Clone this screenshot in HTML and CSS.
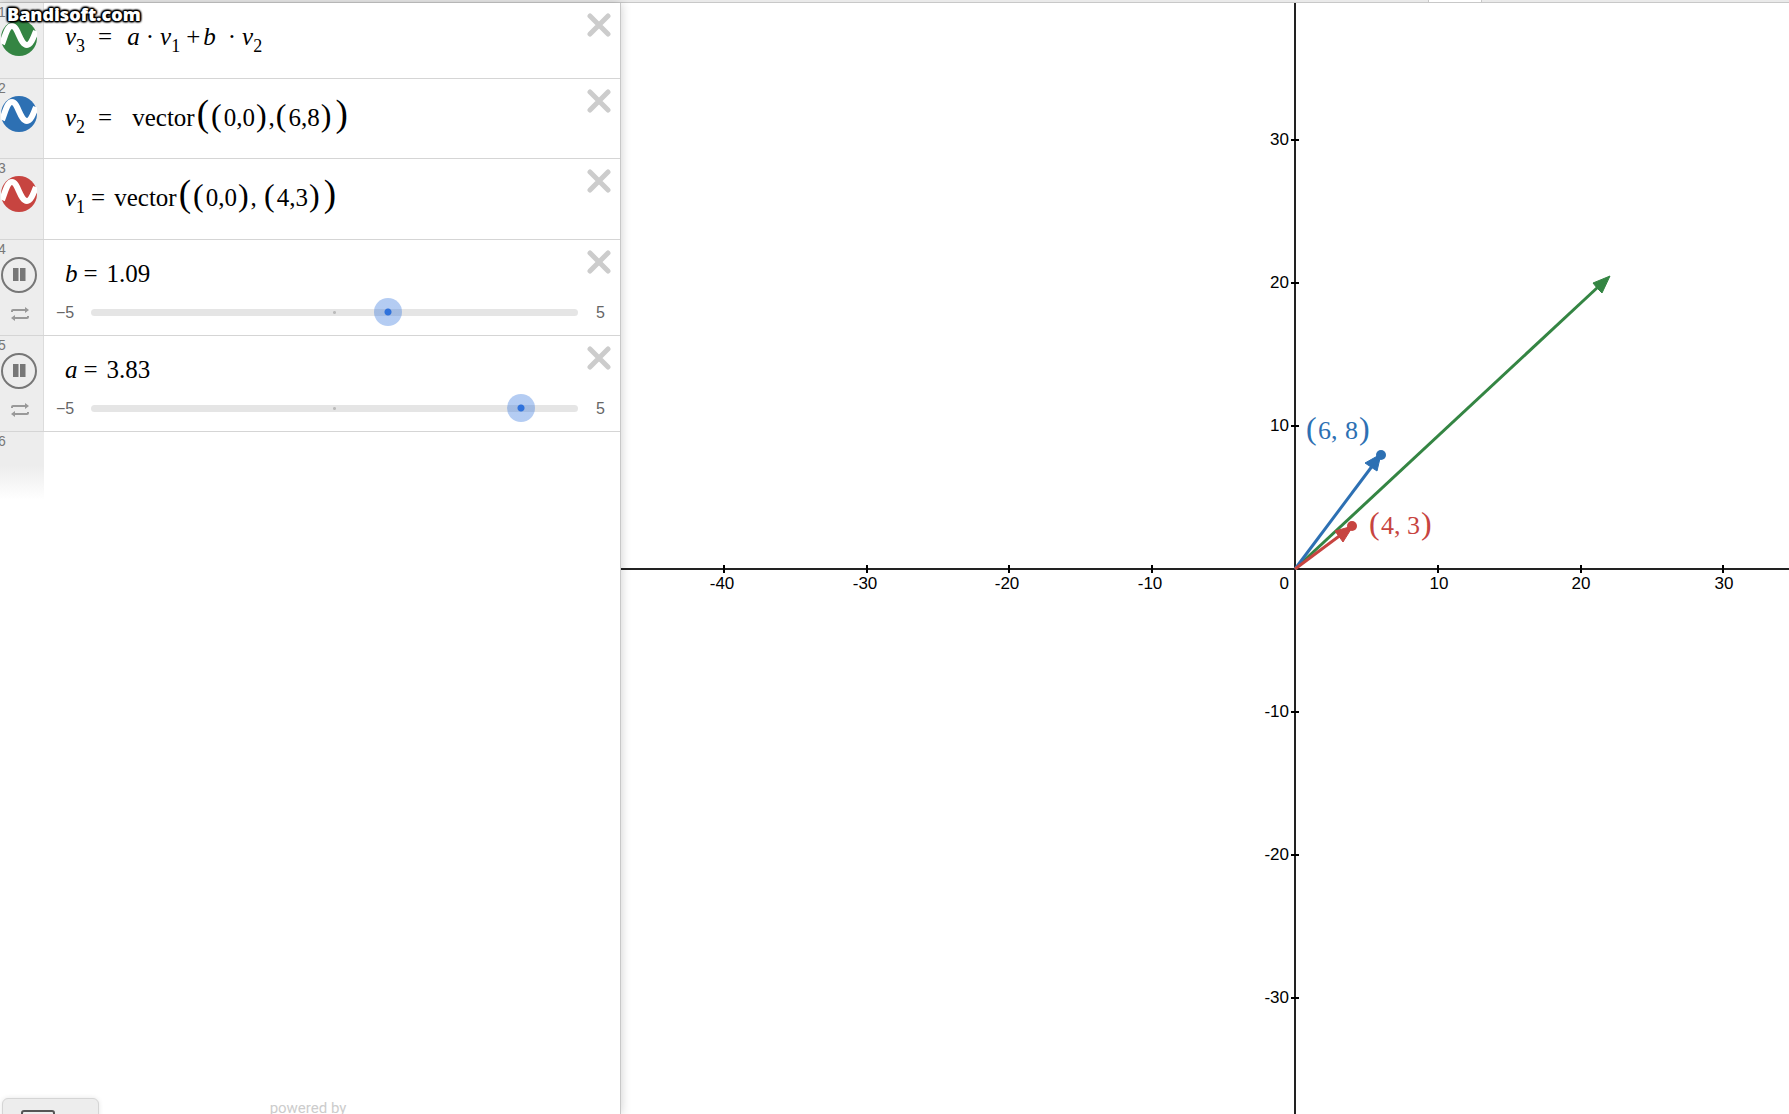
FILE: index.html
```html
<!DOCTYPE html>
<html lang="en">
<head>
    <meta charset="UTF-8">
    <meta name="viewport" content="width=device-width, initial-scale=1.0">
    <title>Vector Calculator</title>
    <link rel="stylesheet" href="styles.css">
</head>
<body>
    <!-- shared icons -->
    <svg class="icon-defs" aria-hidden="true">
        <symbol id="icon-wave" viewBox="0 0 36 36">
            <circle cx="18" cy="18" r="18" fill="currentColor"/>
            <path d="M1 24 C4 17 6 6 11 6 C17 6 19 25 26 25 C30 25 33 16 35 11" fill="none" stroke="#fff" stroke-width="6"/>
        </symbol>
        <symbol id="icon-pause" viewBox="0 0 36 36">
            <circle cx="18" cy="18" r="17" fill="none" stroke="#777" stroke-width="2"/>
            <path d="M12 11h5.5v13h-5.5zM19 11h5.5v13h-5.5z" fill="#777"/>
        </symbol>
        <symbol id="icon-loop" viewBox="0 0 20 16">
            <path d="M2 6 V5 Q2 4 3 4 H15 M18 10 V11 Q18 12 17 12 H5" fill="none" stroke="#999" stroke-width="2"/>
            <path d="M15 1 L19 4 L15 7zM5 9 L1 12 L5 15z" fill="#999"/>
        </symbol>
        <symbol id="icon-close" viewBox="0 0 24 24">
            <path d="M3 3 L21 21 M21 3 L3 21" fill="none" stroke="#ccc" stroke-width="5" stroke-linecap="round"/>
        </symbol>
    </svg>

    <header class="topbar">
        <button class="topbar-tab" aria-label="Graph settings"></button>
    </header>
    <div class="watermark">Bandisoft.com</div>

    <main class="calculator">
        <section class="pane">
            <ol class="expressions">
                <li class="expression first">
                    <div class="gutter">
                        <span class="index">1</span>
                        <button class="toggle green" aria-label="Hide v3"><svg><use href="#icon-wave"/></svg></button>
                    </div>
                    <div class="content">
                        <div class="math"><i>v</i><sub>3</sub><span class="eq wide">=</span><i>a</i><span class="dot">·</span><i>v</i><sub>1</sub><span class="plus">+</span><i>b</i><span class="dot spaced">·</span><i>v</i><sub>2</sub></div>
                    </div>
                    <button class="close" aria-label="Delete expression 1"><svg><use href="#icon-close"/></svg></button>
                </li>
                <li class="expression tall">
                    <div class="gutter">
                        <span class="index">2</span>
                        <button class="toggle blue" aria-label="Hide v2"><svg><use href="#icon-wave"/></svg></button>
                    </div>
                    <div class="content">
                        <div class="math"><i>v</i><sub>2</sub><span class="eq wider">=</span>vector<span class="outer">(</span><span class="paren">(</span>0,0<span class="paren">)</span>,<span class="paren">(</span>6,8<span class="paren">)</span><span class="outer">)</span></div>
                    </div>
                    <button class="close" aria-label="Delete expression 2"><svg><use href="#icon-close"/></svg></button>
                </li>
                <li class="expression tall">
                    <div class="gutter">
                        <span class="index">3</span>
                        <button class="toggle red" aria-label="Hide v1"><svg><use href="#icon-wave"/></svg></button>
                    </div>
                    <div class="content">
                        <div class="math"><i>v</i><sub>1</sub><span class="eq">=</span>vector<span class="outer">(</span><span class="paren">(</span>0,0<span class="paren">)</span>, <span class="paren">(</span>4,3<span class="paren">)</span><span class="outer">)</span></div>
                    </div>
                    <button class="close" aria-label="Delete expression 3"><svg><use href="#icon-close"/></svg></button>
                </li>
                <li class="expression">
                    <div class="gutter">
                        <span class="index">4</span>
                        <button class="toggle" aria-label="Pause b"><svg><use href="#icon-pause"/></svg></button>
                        <button class="loop" aria-label="Loop mode"><svg><use href="#icon-loop"/></svg></button>
                    </div>
                    <div class="content">
                        <label class="math" for="slider-b"><i>b</i><span class="eq">=</span>1.09</label>
                        <div class="slider">
                            <span class="min">−5</span>
                            <div class="track"><input type="range" id="slider-b" min="-5" max="5" step="0.01" value="1.09"></div>
                            <span class="max">5</span>
                        </div>
                    </div>
                    <button class="close" aria-label="Delete expression 4"><svg><use href="#icon-close"/></svg></button>
                </li>
                <li class="expression">
                    <div class="gutter">
                        <span class="index">5</span>
                        <button class="toggle" aria-label="Pause a"><svg><use href="#icon-pause"/></svg></button>
                        <button class="loop" aria-label="Loop mode"><svg><use href="#icon-loop"/></svg></button>
                    </div>
                    <div class="content">
                        <label class="math" for="slider-a"><i>a</i><span class="eq">=</span>3.83</label>
                        <div class="slider">
                            <span class="min">−5</span>
                            <div class="track"><input type="range" id="slider-a" min="-5" max="5" step="0.01" value="3.83"></div>
                            <span class="max">5</span>
                        </div>
                    </div>
                    <button class="close" aria-label="Delete expression 5"><svg><use href="#icon-close"/></svg></button>
                </li>
                <li class="expression empty">
                    <div class="gutter"><span class="index">6</span></div>
                </li>
            </ol>
            <footer class="pane-footer">
                <button class="keypad" aria-label="Show keypad">
                    <svg width="34" height="24" viewBox="0 0 34 24"><rect x="1" y="1" width="32" height="22" rx="2" fill="none" stroke="#555" stroke-width="2"/></svg>
                </button>
                <span class="powered">powered by</span>
            </footer>
        </section>

        <!-- origin of the graph is 0,0; ten units are 143 wide -->
        <svg class="graph" viewBox="-674 -566 1168 1111" preserveAspectRatio="xMidYMid slice" role="img" aria-label="Vectors v1, v2 and v3">
            <path class="axis" d="M-675 0H494M0 -567V545"/>
            <path class="tick" d="M-571 -4V4M-428 -4V4M-286 -4V4M-143 -4V4M143 -4V4M286 -4V4M428 -4V4"/>
            <path class="tick" d="M-4 -429H4M-4 -286H4M-4 -143H4M-4 143H4M-4 286H4M-4 429H4"/>

            <g class="labels-x">
                <text x="-573" y="20">-40</text>
                <text x="-430" y="20">-30</text>
                <text x="-288" y="20">-20</text>
                <text x="-145" y="20">-10</text>
                <text x="144" y="20">10</text>
                <text x="286" y="20">20</text>
                <text x="429" y="20">30</text>
            </g>
            <g class="labels-y">
                <text x="-6" y="-424">30</text>
                <text x="-6" y="-281">20</text>
                <text x="-6" y="-138">10</text>
                <text x="-6" y="20">0</text>
                <text x="-6" y="148">-10</text>
                <text x="-6" y="291">-20</text>
                <text x="-6" y="434">-30</text>
            </g>

            <g class="green">
                <path class="vector" d="M0 0L303 -282"/>
                <path class="head" d="M315 -293L307 -276L302 -281L298 -286z"/>
            </g>
            <g class="blue">
                <path class="vector" d="M0 0L78 -104"/>
                <path class="head" d="M86 -115L82 -98L70 -106z"/>
                <circle cx="86" cy="-114" r="5"/>
                <text class="point" y="-130"><tspan class="brace" x="11">(</tspan><tspan x="23">6,</tspan><tspan x="50">8</tspan><tspan class="brace" x="64">)</tspan></text>
            </g>
            <g class="red">
                <path class="vector" d="M0 0L47 -35"/>
                <path class="head" d="M58 -43L48 -27L40 -38z"/>
                <circle cx="57" cy="-43" r="5"/>
                <text class="point" y="-35"><tspan class="brace" x="74">(</tspan><tspan x="86">4,</tspan><tspan x="112">3</tspan><tspan class="brace" x="126">)</tspan></text>
            </g>
        </svg>
    </main>
</body>
</html>
```
FILE: styles.css
```css
* {
    box-sizing: border-box;
}
body {
    margin: 0;
    height: 100vh;
    display: flex;
    flex-direction: column;
    overflow: hidden;
    background: white;
    font-family: "Liberation Sans", Arial, sans-serif;
}
button {
    padding: 0;
    border: none;
    background: none;
    cursor: pointer;
}
button svg {
    display: block;
    width: 100%;
    height: 100%;
}
.icon-defs {
    display: none;
}
.green {
    color: #348543;
}
.blue {
    color: #2d70b3;
}
.red {
    color: #c74440;
}

/* top bar */
.topbar {
    display: flex;
    justify-content: flex-end;
    flex: none;
    height: 3px;
    padding-right: 307px;
    background: #eaeaea;
    border-bottom: 1px solid #c8c8c8;
}
.topbar-tab {
    width: 54px;
    background: white;
    border: solid #c8c8c8;
    border-width: 0 1px;
}
.watermark {
    position: absolute;
    top: 3px;
    left: 7px;
    z-index: 3;
    color: white;
    font-family: "Open Sans", sans-serif;
    font-size: 18px;
    font-weight: 800;
    line-height: 22px;
    text-shadow: 1px 0 1px black, -1px 0 1px black, 0 1px 1px black, 0 -1px 1px black,
        1px 1px 2px black, -1px -1px 2px black, 1px -1px 2px black, -1px 1px 2px black,
        0 0 3px black, 0 0 3px black;
}

/* expression list */
.calculator {
    flex: 1;
    min-height: 0;
    display: grid;
    grid-template-columns: 621fr 1168fr;
}
.pane {
    z-index: 1;
    display: flex;
    flex-direction: column;
    min-width: 0;
    min-height: 0;
    background: white;
    border-right: 1px solid #c8c8c8;
    box-shadow: 0 0 10px rgba(0,0,0,0.2);
}
.expressions {
    flex: 1;
    min-height: 0;
    margin: 0;
    padding: 0;
    list-style: none;
}
.expression {
    position: relative;
    display: flex;
    min-height: 96px;
    border-bottom: 1px solid #d5d5d5;
}
.expression.first {
    min-height: 76px;
}
.expression.tall {
    min-height: 80px;
}
.expression.tall + .tall {
    min-height: 81px;
}
.expression.empty {
    min-height: 68px;
    border-bottom: none;
}
.gutter {
    flex: none;
    width: 44px;
    display: flex;
    flex-direction: column;
    padding-left: 1px;
    background: #ededed;
    border-right: 1px solid #dcdcdc;
}
.empty .gutter {
    background: linear-gradient(#ededed 50%, white);
    border-right-color: transparent;
}
.index {
    height: 17px;
    margin-left: -3px;
    color: #777;
    font-size: 14px;
    line-height: 18px;
}
.toggle {
    width: 36px;
    height: 36px;
}
.loop {
    width: 20px;
    height: 16px;
    margin: 13px 0 0 9px;
}
.close {
    position: absolute;
    top: 10px;
    right: 9px;
    width: 24px;
    height: 24px;
}
.content {
    flex: 1;
    min-width: 0;
}
.math {
    display: block;
    padding: 19px 0 0 21px;
    font-family: "Liberation Serif", "Times New Roman", serif;
    font-size: 25px;
    line-height: 30px;
    white-space: nowrap;
}
.tall .math {
    padding-top: 24px;
}
.math sub {
    font-size: 18px;
    line-height: 0;
    vertical-align: -7px;
}
.eq {
    margin: 0 9px 0 6px;
}
.eq.wide {
    margin: 0 15px 0 13px;
}
.eq.wider {
    margin: 0 20px 0 13px;
}
.dot {
    margin: 0 6px;
}
.dot.spaced {
    margin-left: 12px;
}
.plus {
    margin: 0 3px 0 6px;
}
.paren {
    margin: 0 2px 0 1px;
    font-size: 32px;
    line-height: 0;
}
.outer {
    margin: 0 1px 0 2px;
    font-size: 37px;
    line-height: 0;
}

/* sliders */
.slider {
    display: flex;
    align-items: center;
    height: 28px;
    margin-top: 9px;
    color: #666;
    font-size: 16px;
    line-height: 20px;
}
.min {
    width: 47px;
    padding: 1px 0 0 12px;
}
.max {
    width: 42px;
    padding: 1px 0 0 18px;
}
.track {
    flex: 1;
    display: flex;
    align-items: center;
    height: 7px;
    border-radius: 4px;
    background: radial-gradient(circle, #bbb 1px, #e5e5e5 2px);
}
.track input {
    -webkit-appearance: none;
    appearance: none;
    flex: 1;
    min-width: 0;
    height: 28px;
    margin: 0 -14px;
    background: transparent;
}
.track input::-webkit-slider-thumb {
    -webkit-appearance: none;
    width: 28px;
    height: 28px;
    border-radius: 50%;
    background: radial-gradient(circle, #2f72dc 3px, rgba(47,114,220,0.36) 4px);
    cursor: pointer;
}

/* footer */
.pane-footer {
    flex: none;
    display: grid;
    grid-template-columns: 1fr auto 1fr;
    height: 16px;
    padding: 0 6px 0 2px;
}
.keypad {
    width: 97px;
    height: 44px;
    padding: 11px 18px;
    background: #ededed;
    border: 1px solid #d5d5d5;
    border-radius: 6px;
    box-shadow: 0 0 5px rgba(0,0,0,0.1);
}
.keypad svg {
    width: 34px;
    height: 24px;
}
.powered {
    color: #ccc;
    font-family: Roboto, sans-serif;
    font-size: 15px;
    line-height: 20px;
}

/* graph */
.graph {
    display: block;
    width: 100%;
    height: 100%;
    min-height: 0;
}
.axis {
    stroke: #222;
    stroke-width: 2;
}
.tick {
    stroke: black;
    stroke-width: 2;
}
.labels-x, .labels-y {
    font-size: 17px;
    text-anchor: middle;
}
.labels-y {
    text-anchor: end;
}
.graph .green, .graph .blue, .graph .red {
    fill: currentColor;
}
.vector {
    stroke: currentColor;
    stroke-width: 3;
}
.head {
    stroke: currentColor;
    stroke-linejoin: round;
}
.point {
    font-family: "Liberation Serif", "Times New Roman", serif;
    font-size: 26px;
}
.brace {
    font-size: 32px;
}
```
